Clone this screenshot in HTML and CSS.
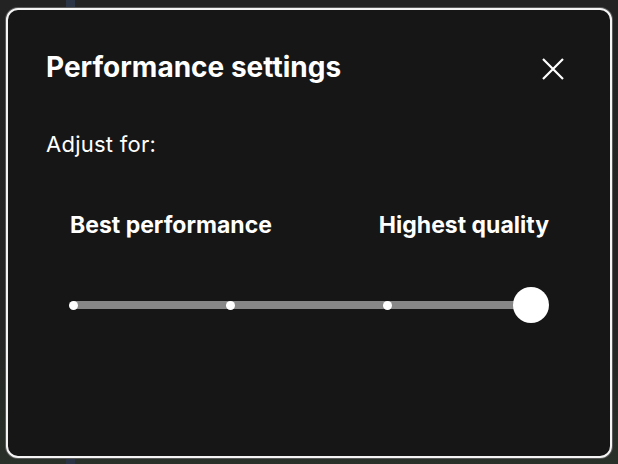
FILE: index.html
```html
<!DOCTYPE html>
<html>
<head>
<meta charset="utf-8">
<link rel="stylesheet" href="styles.css">
</head>
<body>
<div class="backdrop">
  <span class="stripe"></span>
  <div class="dialog">
    <div class="header">
      <h1 class="title">Performance settings</h1>
      <button class="close" aria-label="Close">
        <svg width="24" height="24" viewBox="0 0 24 24"><path d="M2 2 L22 22 M22 2 L2 22" stroke="#fff" stroke-width="2.2" stroke-linecap="butt" fill="none"/></svg>
      </button>
    </div>
    <p class="label">Adjust for:</p>
    <div class="slider-block">
      <div class="ends">
        <span class="end">Best performance</span>
        <span class="end">Highest quality</span>
      </div>
      <div class="slider">
        <div class="track">
          <span class="dot"></span>
          <span class="dot"></span>
          <span class="dot"></span>
          <span class="knob"></span>
        </div>
      </div>
    </div>
  </div>
</div>
</body>
</html>
```
FILE: styles.css
```css
* { box-sizing: border-box; }
html, body { margin: 0; padding: 0; }
body {
  width: 618px;
  height: 464px;
  background: #242424;
  font-family: Inter, "Noto Sans", sans-serif;
  color: #fff;
  overflow: hidden;
}
.backdrop {
  position: relative;
  width: 618px;
  height: 464px;
  padding: 8px 6px 6px 6px;
  background: linear-gradient(180deg, #232323 0%, #242424 70%, #283029 100%);
}
.stripe {
  position: absolute;
  left: 66px;
  top: 0;
  width: 9px;
  height: 464px;
  background: #2b3444;
}
.dialog {
  position: relative;
  width: 606px;
  height: 450px;
  background: #161616;
  border: 2px solid #f4f4f4;
  border-radius: 12px;
  box-shadow: 0 0 0 1px #5a5a5a;
  padding: 37px 45px 0 38px;
  display: flex;
  flex-direction: column;
}
.header {
  display: flex;
  justify-content: space-between;
  align-items: center;
  height: 40px;
}
.title {
  margin: 0;
  font-size: 28px;
  font-weight: 700;
  letter-spacing: 0;
  line-height: 40px;
}
.close {
  width: 24px;
  height: 24px;
  margin-top: 4px;
  padding: 0;
  border: 0;
  background: none;
  display: flex;
}
.label {
  margin: 44px 0 0 0;
  font-size: 22px;
  font-weight: 400;
  letter-spacing: 0.25px;
  line-height: 26px;
}
.slider-block {
  margin: 54px 0 0 24px;
  width: 479px;
}
.ends {
  display: flex;
  justify-content: space-between;
}
.end {
  font-size: 23px;
  font-weight: 700;
  line-height: 28px;
}
.slider {
  margin-top: 48px;
  height: 36px;
  display: flex;
  align-items: center;
}
.track {
  position: relative;
  width: 458px;
  height: 8px;
  margin-left: 3px;
  background: #878787;
  display: flex;
  align-items: center;
}
.dot {
  flex: none;
  width: 9px;
  height: 9px;
  border-radius: 50%;
  background: #fff;
  margin-right: 148px;
}
.dot:first-child { margin-left: -4px; }
.knob {
  position: absolute;
  right: -18px;
  top: -14px;
  width: 36px;
  height: 36px;
  border-radius: 50%;
  background: #fff;
}
```
